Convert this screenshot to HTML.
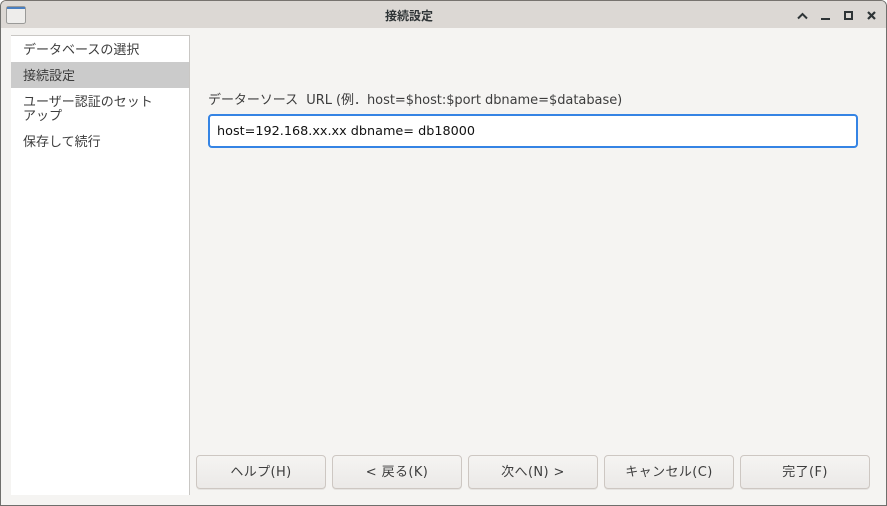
<!DOCTYPE html>
<html lang="ja">
<head>
<meta charset="utf-8">
<style>
html,body{margin:0;padding:0;width:887px;height:506px;overflow:hidden;background:#fff}
body{font-family:"DejaVu Sans","Noto Sans CJK JP",sans-serif;font-size:13px;color:#3d3d3d;position:relative}
.a{position:absolute;white-space:nowrap}
#win{position:absolute;left:0;top:0;width:885px;height:504px;background:#f5f4f2;border:1px solid #6f6f6c;border-top-color:#77736f;border-radius:6px 6px 0 0;overflow:hidden}
#bar{position:absolute;left:0;top:0;width:885px;height:27px;background:#dcd8d4}
.btn{position:absolute;top:455px;width:128px;height:32px;border:1px solid #cdc7c2;border-radius:4px;background:linear-gradient(#f5f4f2,#ebe9e7);text-align:center;line-height:33px;color:#3d3d3d;font-size:13px;letter-spacing:.4px;white-space:nowrap;box-shadow:0 1px 0 #e6e4e1}
</style>
</head>
<body>
<div id="win">
  <div id="bar"></div>
</div>
<svg class="a" style="left:5px;top:5px" width="22" height="20" viewBox="0 0 22 20">
  <rect x="1.5" y="1.5" width="19" height="17" rx="2" fill="#eeedeb" stroke="#9a9a98"/>
  <rect x="2" y="2" width="18" height="2" fill="#4a7fc0"/>
</svg>
<div class="a" style="left:0;top:7px;width:818px;text-align:center;font-size:12px;font-weight:bold;color:#2e3436">接続設定</div>
<svg class="a" style="left:790px;top:6px" width="90" height="18" viewBox="0 0 90 18" fill="none" stroke="#2e3436" stroke-width="2">
  <path d="M8 12.5 L12.5 8 L17 12.5"/>
  <path d="M31 13 H40"/>
  <rect x="55" y="6" width="7" height="7"/>
  <path d="M78 6 L85 13 M85 6 L78 13" stroke-width="2.2"/>
</svg>
<div class="a" style="left:11px;top:35px;width:179px;height:460px;background:#fff;border-top:1px solid #c9c7c4;border-right:1px solid #c9c7c4;box-sizing:border-box"></div>
<div class="a" style="left:11px;top:62px;width:178px;height:26px;background:#cbcbcb"></div>
<div class="a" style="left:23px;top:43px;line-height:16px">データベースの選択</div>
<div class="a" style="left:23px;top:69px;line-height:16px">接続設定</div>
<div class="a" style="left:23px;top:96px;line-height:14px">ユーザー認証のセット<br>アップ</div>
<div class="a" style="left:23px;top:135px;line-height:16px">保存して続行</div>
<div class="a" style="left:208px;top:93px;line-height:16px;font-size:13px;letter-spacing:-.04px;white-space:pre">データーソース  URL (例．host=$host:$port dbname=$database)</div>
<div class="a" style="left:208px;top:114px;width:650px;height:34px;box-sizing:border-box;background:#fff;border:2px solid #3584e4;border-radius:4px;color:#111;font-size:12.8px;line-height:32px;padding-left:7px">host=192.168.xx.xx dbname= db18000</div>
<div class="btn" style="left:196px">ヘルプ(H)</div>
<div class="btn" style="left:332px">&lt; 戻る(K)</div>
<div class="btn" style="left:468px">次へ(N) &gt;</div>
<div class="btn" style="left:604px">キャンセル(C)</div>
<div class="btn" style="left:740px">完了(F)</div>
</body>
</html>
